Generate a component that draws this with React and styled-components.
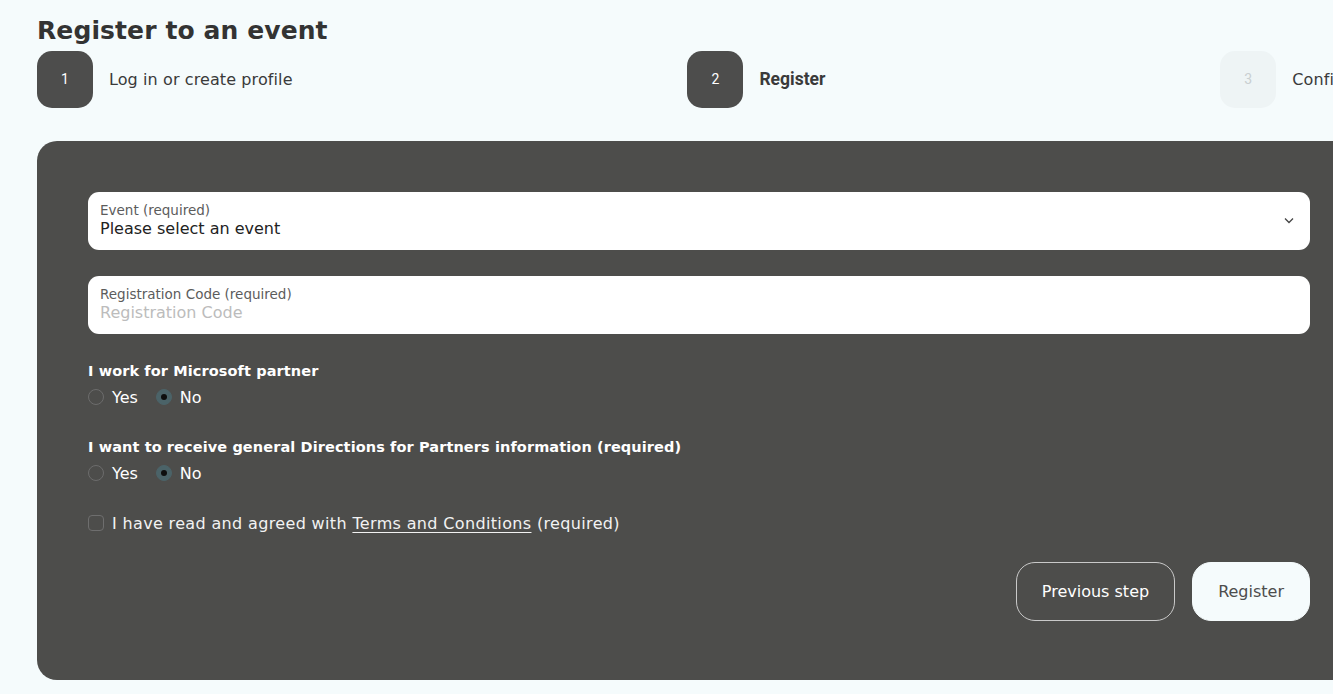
import styled, { createGlobalStyle } from "styled-components";
import { useState } from "react";

const GlobalStyle = createGlobalStyle`
    html, body {
        margin: 0;
        padding: 0;
        background-color: #f5fbfc;
        font-family: "DejaVu Sans", "Liberation Sans", sans-serif;
        overflow: hidden;
    }
`;

const Page = styled.div`
    width: 1324px;
    padding: 14px 0 0 37px;
    display: flex;
    flex-direction: column;
`;

const Title = styled.h1`
    margin: 0;
    font-size: 25px;
    line-height: 34px;
    font-weight: 700;
    color: #333333;
    letter-spacing: 0.1px;
`;

/* the third step runs past the right edge of the window */
const Steps = styled.div`
    display: flex;
    justify-content: space-between;
    align-items: center;
    height: 58px;
    margin-top: 2px;
    margin-right: -36px;
`;

const Step = styled.div`
    display: flex;
    align-items: center;
    gap: 16px;
`;

const StepNumber = styled.div`
    width: 56px;
    height: 57px;
    border-radius: 15px;
    display: flex;
    align-items: center;
    justify-content: center;
    font-family: Roboto, sans-serif;
    font-size: 14px;
    background-color: ${(p) => (p.$done ? "#4d4d4c" : "#eef4f5")};
    color: ${(p) => (p.$done ? "#ffffff" : "#c9cfd1")};
`;

const StepLabel = styled.span`
    color: #3a3a3a;
    font-family: ${(p) => (p.$current ? "Roboto, sans-serif" : "inherit")};
    font-weight: ${(p) => (p.$current ? 700 : 400)};
    font-size: ${(p) => (p.$current ? "17.5px" : "16px")};
    letter-spacing: ${(p) => (p.$current ? "0" : "0.1px")};
`;

const Card = styled.div`
    margin-top: 33px;
    background-color: #4d4d4b;
    border-radius: 20px;
    padding: 51px 51px 59px 51px;
    display: flex;
    flex-direction: column;
`;

const Field = styled.label`
    position: relative;
    height: 58px;
    box-sizing: border-box;
    background-color: #ffffff;
    border-radius: 11px;
    padding: 8px 12px 10px;
    display: flex;
    flex-direction: column;
    justify-content: center;
    margin-bottom: 26px;
`;

const FieldLabel = styled.span`
    font-size: 13.5px;
    line-height: 16px;
    color: #5c5c5c;
`;

const FieldValue = styled.span`
    font-size: 16px;
    line-height: 21px;
    color: ${(p) => (p.$placeholder ? "#bcbcbc" : "#222222")};
`;

const Chevron = styled.svg`
    position: absolute;
    right: 16px;
    top: 25px;
`;

const Question = styled.div`
    display: flex;
    flex-direction: column;
    margin-bottom: 28px;
`;

const QuestionTitle = styled.div`
    font-size: 14.5px;
    line-height: 22px;
    font-weight: 700;
    color: #ffffff;
    letter-spacing: 0.1px;
`;

const Options = styled.div`
    display: flex;
    align-items: center;
    gap: 18px;
    height: 22px;
    margin-top: 4px;
`;

const Option = styled.div`
    display: flex;
    align-items: center;
    gap: 8px;
    font-size: 16px;
    color: #ffffff;
`;

const Radio = styled.span`
    width: 16px;
    height: 16px;
    box-sizing: border-box;
    border-radius: 50%;
    border: 1px solid ${(p) => (p.$checked ? "#4b6368" : "#6c6c6c")};
    background-color: ${(p) => (p.$checked ? "#4b6368" : "transparent")};
    display: flex;
    align-items: center;
    justify-content: center;

    &::after {
        content: "";
        width: 6px;
        height: 6px;
        border-radius: 50%;
        background-color: #0e0e0e;
        display: ${(p) => (p.$checked ? "block" : "none")};
    }
`;

const CheckRow = styled.div`
    display: flex;
    align-items: center;
    gap: 8px;
    height: 22px;
    font-size: 16px;
    letter-spacing: 0.35px;
    color: #f2f2f2;
`;

const Checkbox = styled.span`
    width: 16px;
    height: 16px;
    box-sizing: border-box;
    border: 1px solid #6e6e6e;
    border-radius: 4px;
`;

const TermsLink = styled.a`
    color: #f2f2f2;
    text-decoration: underline;
    text-underline-offset: 3px;
`;

const Actions = styled.div`
    display: flex;
    justify-content: flex-end;
    gap: 17px;
    margin-top: 28px;
`;

const Button = styled.button`
    height: 59px;
    padding: 0 25px;
    border-radius: 19px;
    font-family: inherit;
    font-size: 16px;
    cursor: pointer;
    border: 1px solid ${(p) => (p.$primary ? "#f5fbfc" : "#c9c9c9")};
    background-color: ${(p) => (p.$primary ? "#f5fbfc" : "transparent")};
    color: ${(p) => (p.$primary ? "#4d4d4d" : "#ffffff")};
`;

const steps = [
    { n: 1, label: "Log in or create profile", done: true },
    { n: 2, label: "Register", done: true, current: true },
    { n: 3, label: "Confirmation", done: false },
];

const RadioGroup = ({ value }) => (
    <Options>
        <Option>
            <Radio $checked={value === "yes"} />
            Yes
        </Option>
        <Option>
            <Radio $checked={value === "no"} />
            No
        </Option>
    </Options>
);

const App = () => {
    const [partner] = useState("no");
    const [info] = useState("no");

    return (
        <>
            <GlobalStyle />
            <Page>
                <Title>Register to an event</Title>
                <Steps>
                    {steps.map((s) => (
                        <Step key={s.n}>
                            <StepNumber $done={s.done}>{s.n}</StepNumber>
                            <StepLabel $current={s.current}>{s.label}</StepLabel>
                        </Step>
                    ))}
                </Steps>

                <Card>
                    <Field>
                        <FieldLabel>Event (required)</FieldLabel>
                        <FieldValue>Please select an event</FieldValue>
                        <Chevron width="10" height="7" viewBox="0 0 10 7">
                            <path d="M1 1.5 L5 5.5 L9 1.5" fill="none" stroke="#444" strokeWidth="1.3" />
                        </Chevron>
                    </Field>

                    <Field>
                        <FieldLabel>Registration Code (required)</FieldLabel>
                        <FieldValue $placeholder>Registration Code</FieldValue>
                    </Field>

                    <Question>
                        <QuestionTitle>I work for Microsoft partner</QuestionTitle>
                        <RadioGroup value={partner} />
                    </Question>

                    <Question>
                        <QuestionTitle>
                            I want to receive general Directions for Partners information (required)
                        </QuestionTitle>
                        <RadioGroup value={info} />
                    </Question>

                    <CheckRow>
                        <Checkbox />
                        <span>
                            I have read and agreed with <TermsLink>Terms and Conditions</TermsLink> (required)
                        </span>
                    </CheckRow>

                    <Actions>
                        <Button>Previous step</Button>
                        <Button $primary>Register</Button>
                    </Actions>
                </Card>
            </Page>
        </>
    );
};

export default App;
